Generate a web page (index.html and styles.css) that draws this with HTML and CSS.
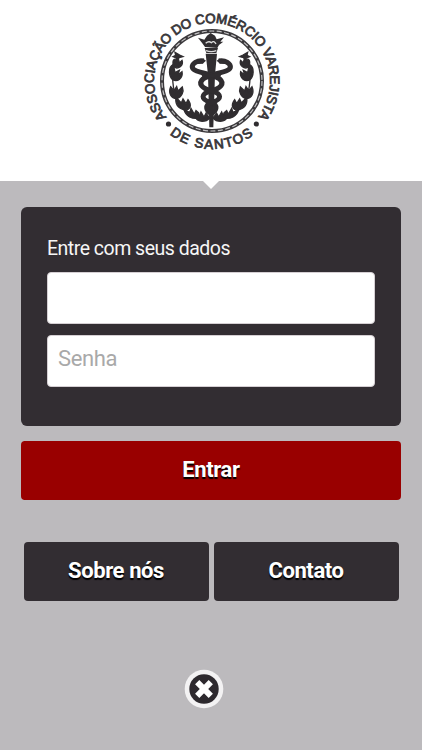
FILE: index.html
```
<!DOCTYPE html>
<html lang="pt-BR">
<head>
    <meta charset="UTF-8">
    <meta name="viewport" content="width=device-width, initial-scale=1.0">
    <title>Associação do Comércio Varejista de Santos</title>
    <link rel="stylesheet" href="styles.css">
</head>
<body>
    <header class="header">
        <svg class="logo" viewBox="140 8 144 148" role="img" aria-label="Logo">
            <defs>
                <path id="arc-top" d="M166.6 117.1A58 58 0 1 1 257.4 117.1"/>
                <path id="arc-bottom" d="M169.7 134.2A68 68 0 0 0 254.3 134.2"/>
                <g id="laurel">
                    <path d="M29 60l-14-8 2 9-8 4 10 4 4 8 4-9 12-3z"/>
                    <path d="M26 75C8 66 6 82 12 96C24 104 42 92 36 76L28 84z"/>
                    <path d="M10 88C-8 98-2 125 8 134C22 143 40 129 36 110L24 120 28 106 15 113z"/>
                    <path d="M2 155C-6 174 3 191 20 191C35 187 43 170 37 156L24 168 20 155 12 167z"/>
                    <path d="M18 187C15 206 25 220 44 225C62 225 66 210 54 194L48 206 39 192 34 204z"/>
                    <path d="M42 224C47 244 66 254 90 249L86 234 78 227 73 238 63 220 59 233z"/>
                    <path d="M77 247C83 263 108 262 119 249L108 235 102 246 93 231 88 244z"/>
                    <path class="stem" d="M8 125Q8 190 45 224Q76 250 121 249"/>
                </g>
            </defs>

            <text class="logo-text"><textPath href="#arc-top" textLength="259" lengthAdjust="spacing">ASSOCIAÇÃO DO COMÉRCIO VAREJISTA</textPath></text>
            <text class="logo-text"><textPath href="#arc-bottom" textLength="90" lengthAdjust="spacing">DE SANTOS</textPath></text>
            <circle class="ink" cx="168.5" cy="124" r="2.6"/>
            <circle class="ink" cx="256.3" cy="124" r="2.6"/>

            <circle class="ring" cx="212" cy="81" r="50"/>
            <circle class="ring-dashes" cx="212" cy="81" r="50"/>

            <g class="ink" transform="translate(170 35) scale(.3333)">
                <use class="laurel" href="#laurel"/>
                <use class="laurel" href="#laurel" transform="translate(248 0) scale(-1 1)"/>
                <!-- torch -->
                <path d="M105 36L98 26 84 8 103 14 111 2 122 -6 135 2 140 13 162 7 151 20 160 20 147 30 142 39z"/>
                <path d="M104 39H144L139 54H109zM107 56H141L135 119 130 277H118L114 119z"/>
                <path class="shine" d="M107 25Q116 17 124 23Q132 15 138 27M108 47Q124 53 139 47"/>
                <!-- snakes -->
                <path class="snake" d="M101 78C82 74 65 87 67 98C74 115 123 113 149 132C165 146 152 160 124 167C92 177 90 193 124 203C145 211 140 227 124 236"/>
                <path class="snake" d="M147 78C166 74 183 87 181 98C174 115 125 113 99 132C83 146 96 160 124 167C156 177 158 193 124 203C103 211 108 227 124 236"/>
                <path d="M79 78L100 71 108 77 98 86 82 87zM169 78L148 71 140 77 150 86 166 87zM92 112L124 118 156 112 148 134 124 126 100 134z"/>
            </g>
        </svg>
    </header>

    <main class="content">
        <form class="login">
            <div class="panel">
                <label class="panel-title" for="usuario">Entre com seus dados</label>
                <input type="text" id="usuario">
                <input type="password" id="senha" placeholder="Senha">
            </div>
            <button type="button" class="btn btn-enter">Entrar</button>
        </form>
        <div class="links">
            <button type="button" class="btn">Sobre nós</button>
            <button type="button" class="btn">Contato</button>
        </div>
        <button type="button" class="close" aria-label="Fechar">
            <svg viewBox="0 0 40 40">
                <circle class="close-edge" cx="20" cy="20" r="19.3"/>
                <circle class="close-disc" cx="20" cy="20" r="14.7"/>
                <path class="close-x" d="M13.2 13.2L26.8 26.8M26.8 13.2L13.2 26.8"/>
            </svg>
        </button>
    </main>
</body>
</html>
```
FILE: styles.css
```
* {
    box-sizing: border-box;
}
body {
    margin: 0;
    min-height: 750px;
    background-color: #bcbabd;
    font-family: Roboto, Arial, sans-serif;
}
.header {
    position: relative;
    height: 181px;
    padding-top: 8px;
    background: #fff;
}
/* Seta abaixo do cabeçalho */
.header::after {
    content: "";
    position: absolute;
    top: 100%;
    left: 203px;
    border: 8.5px solid transparent;
    border-top-color: #fff;
    border-bottom: 0;
}
.logo {
    display: block;
    width: 144px;
    height: 148px;
    margin-left: 140px;
}
.logo-text {
    font-family: "Liberation Sans", Arial, sans-serif;
    font-size: 13.5px;
    fill: #39373a;
    stroke: #39373a;
    stroke-width: 0.8px;
}
.ink {
    fill: #302d30;
}
.ring {
    fill: none;
    stroke: #3b393c;
    stroke-width: 4px;
}
.ring-dashes {
    fill: none;
    stroke: #c4c3c5;
    stroke-width: 1.2px;
    stroke-dasharray: 5 2.5;
}
.laurel {
    stroke: #302d30;
    stroke-width: 4px;
}
.stem {
    fill: none;
}
.shine {
    fill: none;
    stroke: #ddd;
    stroke-width: 4px;
}
.snake {
    fill: none;
    stroke: #302d30;
    stroke-width: 15px;
}
.content {
    padding: 26px 21px 0;
}
.panel {
    display: flex;
    flex-direction: column;
    height: 219px;
    padding: 29px 26px 0;
    background: #322d32;
    border-radius: 6px;
}
.panel-title {
    height: 36px;
    color: #f6f6f6;
    font-size: 19.5px;
    letter-spacing: -0.5px;
    line-height: 25px;
}
input {
    width: 328px;
    height: 52px;
    margin: 0 0 11px;
    padding: 0 10px 6px;
    border: 1px solid #d5cfd3;
    border-radius: 4px;
    background: #fff;
    font-family: inherit;
    font-size: 22px;
    letter-spacing: -0.4px;
}
input::placeholder {
    color: #a9a9a9;
}
.btn {
    flex: 1;
    height: 58.5px;
    padding: 0 0 2px;
    border: 0;
    border-radius: 4px;
    background: #322d32;
    color: #fff;
    font-family: inherit;
    font-size: 22px;
    font-weight: bold;
    letter-spacing: -0.4px;
    text-shadow: 0 2px 1px #000;
}
.btn-enter {
    display: block;
    width: 100%;
    margin-top: 15px;
    background: #990000;
}
.links {
    display: flex;
    gap: 5px;
    margin: 42.5px 2.5px 0;
}
.close {
    display: block;
    width: 40px;
    height: 40px;
    margin: 68px 0 0 163px;
    padding: 0;
    border: 0;
    background: none;
}
.close svg {
    display: block;
}
.close-edge {
    fill: #f3f2f3;
}
.close-disc {
    fill: #2d292e;
}
.close-x {
    stroke: #fff;
    stroke-width: 6px;
}
```
